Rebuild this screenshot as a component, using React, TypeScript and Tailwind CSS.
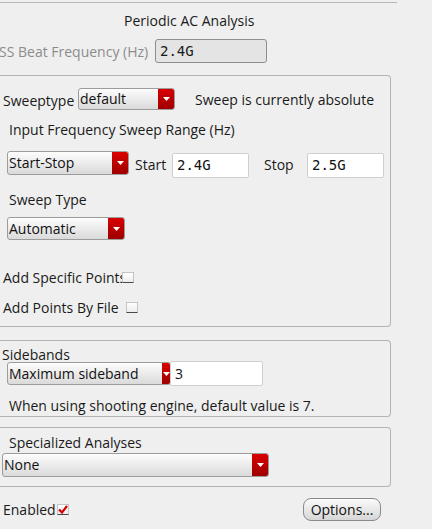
import React from "react";

function Arrow() {
  return (
    <svg width="7" height="4" viewBox="0 0 7 4">
      <path d="M0 0 L7 0 L3.5 4 Z" fill="#ffffff" />
    </svg>
  );
}

function Select({
  label,
  className,
  btn = "w-[16px]",
}: {
  label: string;
  className: string;
  btn?: string;
}) {
  return (
    <div
      className={
        "flex items-stretch rounded-[3px] border border-[#9c9c9c] bg-gradient-to-b from-[#fdfdfd] to-[#dadada] overflow-hidden " +
        className
      }
    >
      <div className="flex-1 flex items-center pl-[1px] text-[14px] text-[#111] leading-none whitespace-nowrap overflow-hidden">
        {label}
      </div>
      <div
        className={
          "flex items-center justify-center bg-gradient-to-b from-[#d90000] to-[#9e0000] " +
          btn
        }
      >
        <Arrow />
      </div>
    </div>
  );
}

function TextBox({ value, className }: { value: string; className: string }) {
  return (
    <div
      className={
        "flex items-center pl-[4px] rounded-[2px] border border-[#cfcfcf] bg-white text-[14px] text-[#111] font-['DejaVu_Sans_Mono',monospace] " +
        className
      }
    >
      {value}
    </div>
  );
}

function Check({ checked = false }: { checked?: boolean }) {
  return (
    <div className="w-[12px] h-[11px] border border-[#c4c4c4] border-b-[#4a4a4a] bg-gradient-to-b from-white to-[#ececec] flex items-center justify-center">
      {checked && (
        <svg width="10" height="9" viewBox="0 0 10 9">
          <path d="M1 4.5 L4 7.5 L9 1" stroke="#d40000" strokeWidth="2.2" fill="none" />
        </svg>
      )}
    </div>
  );
}

export default function App() {
  return (
    <div className="w-[432px] h-[529px] bg-[#efefef] overflow-hidden font-['Open_Sans',sans-serif] text-[14px] text-[#1a1a1a]">
      <div className="mt-[2px] w-[397px] h-px bg-[#b8b8b8]" />

      <div className="h-[35px] flex items-center pl-[124px]">Periodic AC Analysis</div>

      <div className="h-[26px] flex items-center">
        <span className="w-[155px] text-[#8c8c8c] whitespace-nowrap overflow-hidden">
          <span className="block -ml-[1px]">SS Beat Frequency (Hz)</span>
        </span>
        <div className="w-[112px] h-[24px] flex items-center pl-[4px] rounded-[3px] border border-[#8e8e8e] bg-[#e4e4e4] text-[14px] font-['DejaVu_Sans_Mono',monospace]">
          2.4G
        </div>
      </div>

      {/* sweep group */}
      <div className="mt-[11px] w-[391px] h-[252px] border border-l-0 border-[#b3b3b3] rounded-r-[4px]">
        <div className="mt-[10px] h-[26px] flex items-center">
          <span className="w-[78px] pl-[3px] mt-[3px]">Sweeptype</span>
          <Select label="default" className="w-[97px] h-[22px]" />
          <span className="ml-[20px] whitespace-nowrap">Sweep is currently absolute</span>
        </div>

        <div className="mt-[7px] h-[20px] flex items-center pl-[9px]">
          Input Frequency Sweep Range (Hz)
        </div>

        <div className="mt-[12px] h-[29px] flex items-start">
          <Select label="Start-Stop" className="ml-[7px] mt-[0px] w-[122px] h-[24px]" />
          <span className="ml-[6px] mt-[3px] w-[37px]">Start</span>
          <TextBox value="2.4G" className="mt-[2px] w-[77px] h-[25px]" />
          <span className="ml-[15px] mt-[3px] w-[43px]">Stop</span>
          <TextBox value="2.5G" className="mt-[2px] w-[77px] h-[25px]" />
        </div>

        <div className="mt-[9px] h-[20px] flex items-center pl-[9px]">Sweep Type</div>

        <div className="mt-[8px] h-[23px] flex">
          <Select label="Automatic" className="ml-[7px] w-[118px] h-[23px]" />
        </div>

        <div className="mt-[27px] h-[20px] flex items-center">
          <span className="w-[122px] pl-[3px] whitespace-nowrap overflow-hidden">Add Specific Points</span>
          <Check />
        </div>

        <div className="mt-[10px] h-[20px] flex items-center">
          <span className="w-[126px] pl-[3px] whitespace-nowrap overflow-hidden">Add Points By File</span>
          <Check />
        </div>
      </div>

      {/* sidebands group */}
      <div className="mt-[13px] w-[391px] h-[77px] border border-l-0 border-[#b3b3b3] rounded-r-[4px]">
        <div className="mt-[6px] h-[16px] leading-[16px] pl-[2px]">Sidebands</div>
        <div className="-mt-[2px] h-[25px] flex items-center">
          <Select label="Maximum sideband" className="ml-[7px] w-[164px] h-[23px]" btn="w-[8px]" />
          <TextBox
            value="3"
            className="-ml-[1px] w-[93px] h-[25px] font-['Open_Sans',sans-serif] text-[14px] pl-[3px]"
          />
        </div>
        <div className="mt-[9px] h-[20px] flex items-center pl-[9px] whitespace-nowrap">
          When using shooting engine, default value is 7.
        </div>
      </div>

      {/* specialized group */}
      <div className="mt-[10px] w-[391px] h-[60px] border border-l-0 border-[#b3b3b3] rounded-r-[4px]">
        <div className="mt-[4px] h-[20px] flex items-center pl-[9px]">Specialized Analyses</div>
        <div className="mt-[1px] flex">
          <Select label="None" className="ml-[2px] w-[267px] h-[24px]" />
        </div>
      </div>

      <div className="mt-[9px] h-[26px] flex items-center">
        <span className="w-[57px] pl-[3px] whitespace-nowrap overflow-hidden">Enabled</span>
        <Check checked />
        <button className="ml-[234px] w-[78px] h-[23px] rounded-[8px] border border-[#8a8a8a] bg-gradient-to-b from-[#fbfbfb] to-[#d6d6d6] text-[14px] text-[#111] font-['Open_Sans',sans-serif]">
          Options...
        </button>
      </div>
    </div>
  );
}
